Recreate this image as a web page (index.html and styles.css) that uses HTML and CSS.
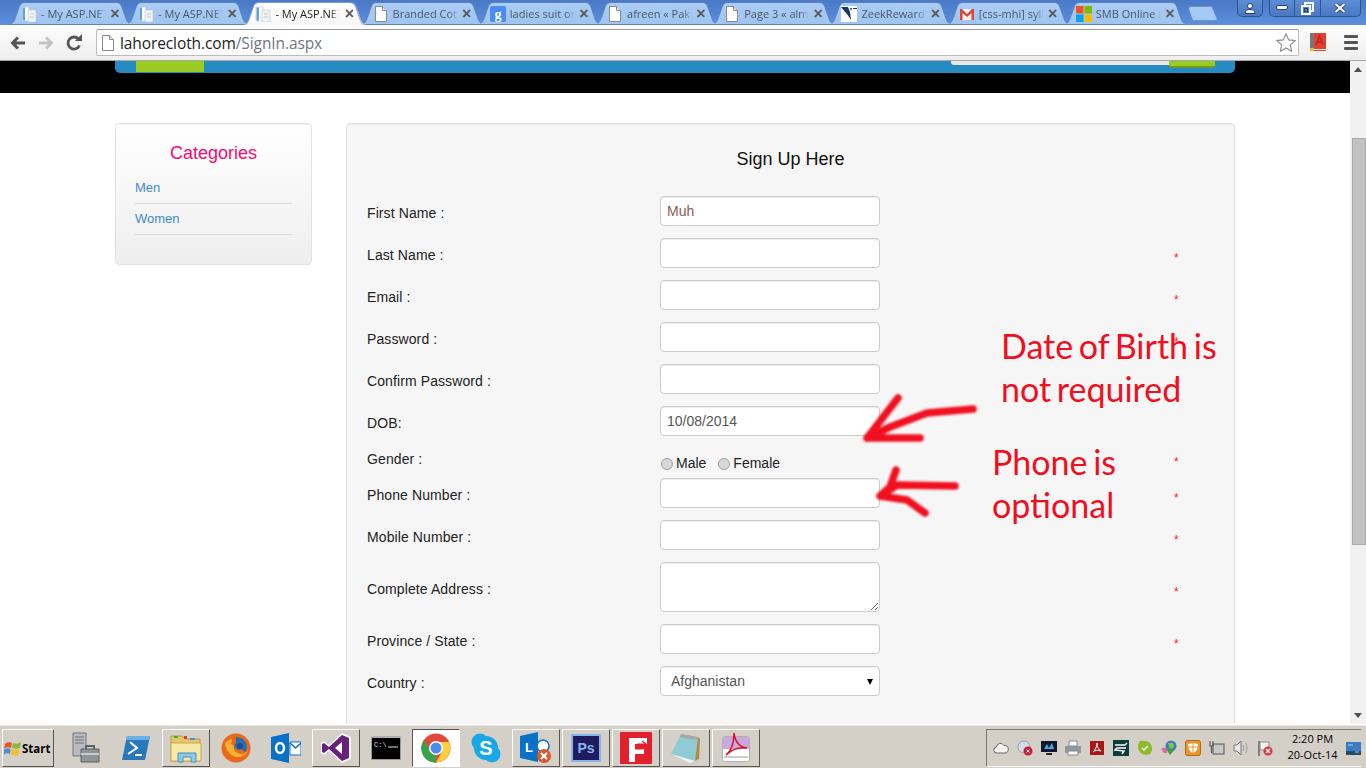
FILE: index.html
```html
<!doctype html>
<html lang="en">
<head>
  <meta charset="utf-8">
  <title>lahorecloth.com/SignIn.aspx</title>
  <link rel="stylesheet" href="styles.css">
</head>
<body>
  <svg class="defs" width="0" height="0">
    <symbol id="doc" viewBox="0 0 16 16">
      <path d="M2.5 .5h7l4 4v11h-11z" fill="#fff" stroke="#8a8a8a"/>
      <path d="M9.5 .5v4h4" fill="#e8e8e8" stroke="#8a8a8a"/>
    </symbol>
    <symbol id="asp" viewBox="0 0 16 16">
      <path d="M1 1h7v14H1z" fill="#fff" stroke="#b8c4d0" stroke-width=".6"/>
      <path d="M1.5 1.5h2.5v13H1.500z" fill="#5aa5e0"/>
      <path d="M7 4h8v12H7z" fill="#f2f2f2" stroke="#b8c4d0" stroke-width=".6"/>
      <path d="M9 8h4M9 11h4" stroke="#c8c8c8"/>
    </symbol>
  </svg>

  <div class="tabstrip">
    <div class="tab"><svg class="favicon"><use href="#asp"/></svg><span class="tab-label">- My ASP.NET</span><span class="tab-close">×</span></div>
    <div class="tab"><svg class="favicon"><use href="#asp"/></svg><span class="tab-label">- My ASP.NET</span><span class="tab-close">×</span></div>
    <div class="tab active"><svg class="favicon"><use href="#asp"/></svg><span class="tab-label">- My ASP.NET</span><span class="tab-close">×</span></div>
    <div class="tab"><svg class="favicon"><use href="#doc"/></svg><span class="tab-label">Branded Cotton</span><span class="tab-close">×</span></div>
    <div class="tab">
      <svg class="favicon" viewBox="0 0 16 16"><rect width="16" height="16" rx="2" fill="#4c8bf0"/><text x="8" y="12.500" text-anchor="middle" font-size="14" font-family="Liberation Serif" font-weight="700" fill="#fff">g</text></svg>
      <span class="tab-label">ladies suit online</span><span class="tab-close">×</span>
    </div>
    <div class="tab"><svg class="favicon"><use href="#doc"/></svg><span class="tab-label">afreen « Pakistan</span><span class="tab-close">×</span></div>
    <div class="tab"><svg class="favicon"><use href="#doc"/></svg><span class="tab-label">Page 3 « almirah</span><span class="tab-close">×</span></div>
    <div class="tab">
      <svg class="favicon" viewBox="0 0 16 16"><rect width="16" height="16" fill="#fff"/><path d="M0 1h7l2 5 1 8-4-6-2-2zM9 2h2l-1 3zM12 2h4v1h-4z" fill="#1c3a5c"/></svg>
      <span class="tab-label">ZeekRewards</span><span class="tab-close">×</span>
    </div>
    <div class="tab">
      <svg class="favicon" viewBox="0 0 16 16"><path d="M1 3h14v11H1z" fill="#f4f0ea"/><path d="M1 14V3h2l5 5 5-5h2v11h-2.500V7L8 11 3.500 7v7z" fill="#d8453a"/></svg>
      <span class="tab-label">[css-mhi] syllabus</span><span class="tab-close">×</span>
    </div>
    <div class="tab">
      <svg class="favicon" viewBox="0 0 16 16"><path d="M0 0h7.500v7.500H0z" fill="#f25022"/><path d="M8.500 0H16v7.500H8.500z" fill="#7fba00"/><path d="M0 8.500h7.500V16H0z" fill="#00a4ef"/><path d="M8.500 8.500H16V16H8.500z" fill="#ffb900"/></svg>
      <span class="tab-label">SMB Online Event</span><span class="tab-close">×</span>
    </div>
    <div class="newtab"></div>
    <div class="winbtn user">
      <svg width="12" height="11" viewBox="0 0 12 11"><circle cx="6" cy="3" r="2.500" fill="#fff" stroke="#24406e"/><path d="M1 10.500c0-3 2-4 5-4s5 1 5 4z" fill="#fff" stroke="#24406e"/></svg>
    </div>
    <div class="wincontrols">
      <div class="winbtn"><svg width="12" height="6" viewBox="0 0 12 6"><rect x=".5" y=".5" width="11" height="4" rx="1.500" fill="#fff" stroke="#24406e"/></svg></div>
      <div class="winbtn"><svg width="13" height="13" viewBox="0 0 13 13"><rect x="4" y="1" width="8" height="8" fill="none" stroke="#fff" stroke-width="2"/><rect x="1" y="4" width="8" height="8" fill="#4f7fc9" stroke="#fff" stroke-width="2"/><rect x="3.500" y="6.500" width="3" height="3" fill="none" stroke="#24406e"/></svg></div>
      <div class="winbtn close"><svg width="14" height="10" viewBox="0 0 14 10"><path d="M2.500 1l9 8M11.500 1l-9 8" stroke="#24406e" stroke-width="3.600"/><path d="M2.500 1l9 8M11.500 1l-9 8" stroke="#fff" stroke-width="2"/></svg></div>
    </div>
  </div>

  <div class="toolbar">
    <svg class="navbtn" width="20" height="16" viewBox="0 0 20 16"><path d="M17 8H5M10 2.500 4.500 8 10 13.500" fill="none" stroke="#555" stroke-width="3"/></svg>
    <svg class="navbtn" width="20" height="16" viewBox="0 0 20 16"><path d="M3 8h12M10 2.500 15.500 8 10 13.500" fill="none" stroke="#c4c4c4" stroke-width="3"/></svg>
    <svg class="navbtn" width="18" height="18" viewBox="0 0 18 18"><path d="M14.500 11.500a6 6 0 1 1-1-6.500" fill="none" stroke="#555" stroke-width="2.800"/><path d="M10 7h7V0z" fill="#555"/></svg>
    <div class="omnibox">
      <svg class="omni-page" width="16" height="16"><use href="#doc"/></svg>
      <span class="url">lahorecloth.com<span class="url-path">/SignIn.aspx</span></span>
      <svg class="star" width="20" height="19" viewBox="0 0 20 19"><path d="m10 1 2.700 5.900 6.300.7-4.700 4.300 1.300 6.300L10 15l-5.600 3.200 1.300-6.300L1 7.600l6.300-.7z" fill="#fff" stroke="#8f8f8f" stroke-width="1.200"/></svg>
    </div>
    <svg class="ext" width="16" height="19" viewBox="0 0 16 19"><path d="M0 0h16v16H4v2H0z" fill="#e04030"/><path d="M0 0h4v15H0z" fill="#777"/><path d="M0 15h4v3H0z" fill="#e8b93c"/><path d="M4 17.500h12" stroke="#d84030"/><path d="M6 12 9.500 3 13 12M7.500 9h4" fill="none" stroke="#b52a20" stroke-width="1.500"/></svg>
    <div class="menu"><span></span><span></span><span></span></div>
  </div>

  <div class="viewport">
    <div class="page">
      <div class="band">
        <div class="navbar">
          <div class="navbar-active"></div>
          <div class="search">
            <div class="search-input"></div>
            <div class="search-button"></div>
          </div>
        </div>
      </div>

      <div class="layout">
        <aside class="sidebar">
          <h3>Categories</h3>
          <ul>
            <li><a>Men</a></li>
            <li><a>Women</a></li>
          </ul>
        </aside>

        <section class="signup">
          <h2>Sign Up Here</h2>
          <div class="row">
            <label>First Name :</label>
            <input class="field name-value" type="text" value="Muh">
            <span></span>
          </div>
          <div class="row">
            <label>Last Name :</label>
            <input class="field" type="text">
            <span class="req">*</span>
          </div>
          <div class="row">
            <label>Email :</label>
            <input class="field" type="text">
            <span class="req">*</span>
          </div>
          <div class="row">
            <label>Password :</label>
            <input class="field" type="password">
            <span class="req">*</span>
          </div>
          <div class="row">
            <label>Confirm Password :</label>
            <input class="field" type="password">
            <span class="req">*</span>
          </div>
          <div class="row">
            <label>DOB:</label>
            <input class="field" type="text" value="10/08/2014">
            <span></span>
          </div>
          <div class="row row-gender">
            <label>Gender :</label>
            <div class="radios">
              <span class="radio"></span><span class="radio-text">Male</span>
              <span class="radio"></span><span class="radio-text">Female</span>
            </div>
            <span class="req">*</span>
          </div>
          <div class="row">
            <label>Phone Number :</label>
            <input class="field" type="text">
            <span class="req">*</span>
          </div>
          <div class="row">
            <label>Mobile Number :</label>
            <input class="field" type="text">
            <span class="req">*</span>
          </div>
          <div class="row">
            <label>Complete Address :</label>
            <textarea class="field area"></textarea>
            <span class="req">*</span>
          </div>
          <div class="row">
            <label>Province / State :</label>
            <input class="field" type="text">
            <span class="req">*</span>
          </div>
          <div class="row">
            <label>Country :</label>
            <div class="select-wrap">
              <select class="field select"><option>Afghanistan</option></select>
            </div>
            <span></span>
          </div>
        </section>
      </div>

      <!-- red notes painted over the screenshot -->
      <div class="note note-dob">Date of Birth is<br>not required</div>
      <div class="note note-phone">Phone is<br>optional</div>
      <svg class="scribble" width="120" height="130" viewBox="860 390 120 130">
        <path d="M973 409 927 413 890 427 867 438M898 398 867 438 920 438" />
        <path d="M955 486 897 485 880 496M896 470 890 487 880 496 907 500 925 513" />
      </svg>
    </div>

    <div class="scrollbar">
      <div class="sb-up"></div>
      <div class="sb-track"><div class="sb-thumb"></div></div>
      <div class="sb-down"></div>
    </div>
  </div>

  <div class="taskbar">
    <div class="start">
      <svg width="17" height="15" viewBox="0 0 17 15"><path d="M1 3c2-2 4-2 7-1L7 7C4 6 2 6 0 8z" fill="#e0582a"/><path d="M9 2c3 1 5 1 8-1l-1 6c-3 1-5 1-8 0z" fill="#8cb63c"/><path d="M0 9c2-2 4-2 6.500-1L6 13c-2-1-4-1-7 1z" fill="#4a90d8"/><path d="M7.500 8c3 1 5 1 8 0l-1 6c-3 1-5 1-8-1z" fill="#f0c030"/></svg>
      <span>Start</span>
    </div>
    <div class="task-items">
      <div class="task">
        <svg width="30" height="32" viewBox="0 0 30 32"><path d="M2 1h13v23H2z" fill="#b8bcc0" stroke="#707478"/><path d="M4 5h9M4 8h9M4 11h9" stroke="#70757a"/><path d="M10 17h18v13H10z" fill="#8e9498" stroke="#5c6064"/><path d="M15 17v-3h8v3" fill="none" stroke="#5c6064" stroke-width="2"/><path d="M10 22h18" stroke="#c8ccd0" stroke-width="2"/></svg>
      </div>
      <div class="task">
        <svg width="30" height="26" viewBox="0 0 30 26"><path d="M6 1h23l-5 24H1z" fill="#2a78bc"/><path d="M6 1h23l-1 4H5z" fill="#6cb0e4"/><path d="M9 7l7 6-9 6M14 20h7" fill="none" stroke="#fff" stroke-width="2"/></svg>
      </div>
      <div class="task raised">
        <svg width="32" height="30" viewBox="0 0 32 30"><path d="M1 3h11l3 3h15v22H1z" fill="#e6c868" stroke="#b89a40"/><path d="M4 3h4v2H4z" fill="#3cb048"/><path d="M14 3h3v3h-3z" fill="#d84030"/><path d="M20 5h5v2h-5z" fill="#4a90d8"/><path d="M1 10h30v18H1z" fill="#f8e8a8" stroke="#c8a850"/><path d="M8 29v-9h18v9h-5v-5h-8v5z" fill="#8cc8ec" stroke="#4a90c0"/></svg>
      </div>
      <div class="task">
        <svg width="30" height="30" viewBox="0 0 30 30"><circle cx="15" cy="15" r="14.500" fill="#e8681c"/><path d="M15 4c6 0 11 4 11 10 0 2-1 4-2 5-2-3-5-3-7-2l-4-3 2-5z" fill="#2a6cb0"/><path d="M4 10c1 10 8 15 15 14 4-1 7-3 8-7-2 4-7 5-10 3-3-1-5-4-4-7l-3-2 1-5c-3 1-5 2-7 4z" fill="#f8b030"/><circle cx="19" cy="13" r="3" fill="#1e4c90"/></svg>
      </div>
      <div class="task">
        <svg width="30" height="30" viewBox="0 0 30 30"><path d="M0 4 18 0v30L0 26z" fill="#0a72c6"/><ellipse cx="9" cy="15" rx="4" ry="5" fill="none" stroke="#fff" stroke-width="2.500"/><path d="M19 9h11v13H19z" fill="#fff" stroke="#0a72c6"/><path d="M19 10l5.500 5L30 10" fill="none" stroke="#0a72c6" stroke-width="1.500"/></svg>
      </div>
      <div class="task raised">
        <svg width="32" height="32" viewBox="0 0 32 32"><path d="M22 1 31 5v22l-9 4L9 19l-5 4-3-2V11l3-2 5 4z" fill="#fff"/><path d="M22 3 29 6v20l-7 3-13-12-5 4-2-1V12l2-1 5 4zM22 10l-7 6 7 6z" fill="#68217a" fill-rule="evenodd"/></svg>
      </div>
      <div class="task">
        <svg width="30" height="24" viewBox="0 0 30 24"><rect x=".5" y=".5" width="29" height="23" fill="#000" stroke="#999"/><path d="M0 0h30v2H0z" fill="#b0b0b0"/><text x="3" y="11" font-family="Liberation Mono" font-size="7" fill="#ddd">C:\</text><path d="M17 11h10" stroke="#ddd"/></svg>
      </div>
      <div class="task pressed">
        <svg width="30" height="30" viewBox="0 0 30 30"><circle cx="15" cy="15" r="14.500" fill="#e04a3a"/><path d="M15 15 2.500 22.500A14.500 14.500 0 0 0 15 29.500z" fill="#3aa24a"/><path d="M2.500 23A14.500 14.500 0 0 1 3 7l7 12 5 10.500A14.500 14.500 0 0 1 2.500 23z" fill="#3aa24a"/><path d="M15 9h13a14.500 14.500 0 0 1-13 20.500l6-11z" fill="#fbd03c"/><circle cx="15" cy="15" r="7" fill="#fff"/><circle cx="15" cy="15" r="5.500" fill="#4a8ce8"/></svg>
      </div>
      <div class="task">
        <svg width="30" height="30" viewBox="0 0 30 30"><circle cx="9" cy="9" r="8.500" fill="#18a8e8"/><circle cx="21" cy="21" r="8.500" fill="#18a8e8"/><circle cx="15" cy="15" r="12" fill="#18a8e8"/><text x="15" y="22" text-anchor="middle" font-family="Liberation Sans" font-weight="700" font-size="20" fill="#fff">S</text></svg>
      </div>
      <div class="task raised">
        <svg width="32" height="32" viewBox="0 0 32 32"><path d="M0 4 18 0v30L0 26z" fill="#0a72c6"/><text x="5" y="20" font-family="Liberation Sans" font-weight="700" font-size="13" fill="#fff">L</text><circle cx="23" cy="14" r="6" fill="#fff" stroke="#0a72c6" stroke-width="1.500"/><circle cx="24" cy="24" r="7" fill="#d85a30"/><path d="M21 21l6 6M27 21l-6 6" stroke="#fff" stroke-width="2"/></svg>
      </div>
      <div class="task raised">
        <svg width="30" height="28" viewBox="0 0 30 28"><rect x="1" y="1" width="28" height="26" fill="#1f1b60" stroke="#88b4ec" stroke-width="2"/><text x="15" y="19" text-anchor="middle" font-family="Liberation Sans" font-weight="700" font-size="14" fill="#88b4ec">Ps</text></svg>
      </div>
      <div class="task raised">
        <svg width="32" height="32" viewBox="0 0 32 32"><rect width="32" height="32" rx="1" fill="#e3202e"/><path d="M9 30V6h18v6H15v5h9v5h-9v8z" fill="#fff"/><path d="M17 12h9M22 9l4 3-4 3M15 17h8" stroke="#e3202e" stroke-width="1.200" fill="none"/></svg>
      </div>
      <div class="task raised">
        <svg width="32" height="30" viewBox="0 0 32 30"><path d="M11 1 28 4 25 28 1 21z" fill="#8ecbd4"/><path d="M11 1 28 4 27 7 9.500 4z" fill="#a8a8a8"/><path d="M28 4l2 2-1 20-4 2z" fill="#b08a40"/><path d="M1 21l24 7-5 2z" fill="#eef2f4"/></svg>
      </div>
      <div class="task raised">
        <svg width="28" height="30" viewBox="0 0 28 30"><rect x=".5" y="3.500" width="27" height="25" rx="2" fill="#fff" stroke="#b0b0b0"/><path d="M1 4h26v12H1z" fill="#c8a8e0"/><path d="M2 24h24" stroke="#ccc" stroke-width="2"/><path d="M12 0c1 8 4 14 13 15-7-1-15 1-21 7 5-4 8-12 8-22" fill="none" stroke="#e01020" stroke-width="1.500"/></svg>
      </div>
    </div>

    <div class="tray">
      <svg class="tray-icon" viewBox="0 0 16 16"><path d="M4 13a3 3 0 0 1-.500-6A4 4 0 0 1 11 5.500 3.500 3.500 0 0 1 12 13z" fill="#f4f4f4" stroke="#666"/></svg>
      <svg class="tray-icon" viewBox="0 0 16 16"><circle cx="7" cy="7" r="6" fill="#d4dde2" stroke="#8fa2ac"/><circle cx="11" cy="11" r="4.500" fill="#c81e3c"/><path d="M9.500 9.500l3 3M12.500 9.500l-3 3" stroke="#fff"/></svg>
      <svg class="tray-icon" viewBox="0 0 16 16"><rect y="1" width="16" height="11" fill="#10182c"/><path d="M3 9l3-5 2 4 3-5 2 6z" fill="#4aa8e8"/><path d="M5 13h6v2H5z" fill="#222"/></svg>
      <svg class="tray-icon" viewBox="0 0 16 16"><path d="M4 1h8v5H4z" fill="#fff" stroke="#888"/><rect y="6" width="16" height="7" rx="1" fill="#8e98a4"/><path d="M3 11h10v4H3z" fill="#fff" stroke="#888"/></svg>
      <svg class="tray-icon" viewBox="0 0 16 16"><rect x="1" y="1" width="14" height="14" fill="#a81818"/><path d="M8 3c0 4 1 6 4 8-3-1-6-1-8 1 2-2 4-5 4-9z" fill="none" stroke="#fff"/></svg>
      <svg class="tray-icon" viewBox="0 0 16 16"><rect width="16" height="16" fill="#0c3c3c"/><path d="M2 5h10l2-2M13 8H4l-2 2 9 1-2 3" fill="none" stroke="#fff" stroke-width="1.500"/></svg>
      <svg class="tray-icon" viewBox="0 0 16 16"><path d="M3 1h6c5 1 6 5 6 8s-2 6-6 6c-3 0-8-3-8-8 0-3 1-5 2-6z" fill="#8cbc2c"/><path d="M5 8l2 2 4-4" fill="none" stroke="#fff" stroke-width="1.500"/></svg>
      <svg class="tray-icon" viewBox="0 0 16 16"><circle cx="10" cy="6" r="5.500" fill="#3c80c0"/><path d="M7 3l5 0 1 4-4 2z" fill="#8cc048"/><path d="M0 9c2-2 4-2 6 0v4H3z" fill="#e06a9a"/><path d="M5 9h9l-5 6z" fill="#3ca038"/></svg>
      <svg class="tray-icon" viewBox="0 0 16 16"><rect x=".5" y=".5" width="15" height="15" rx="2" fill="#ec9428" stroke="#b06a10"/><path d="M3 4c3-1 7-1 10 0 0 5-2 8-5 9-3-1-5-4-5-9z" fill="#fff"/><path d="M8 3v10M3 7h10" stroke="#ec9428"/></svg>
      <svg class="tray-icon" viewBox="0 0 16 16"><rect x="4" y="4" width="11" height="10" fill="#c8c8c8" stroke="#555"/><path d="M1 1v5h3V1M2.500 6v7" fill="none" stroke="#555" stroke-width="1.200"/></svg>
      <svg class="tray-icon" viewBox="0 0 16 16"><path d="M1 5h3l4-4v14l-4-4H1z" fill="#e8e8e8" stroke="#777"/><path d="M10 5c1 2 1 4 0 6M12.500 3c2 3 2 7 0 10" fill="none" stroke="#999"/></svg>
      <svg class="tray-icon" viewBox="0 0 16 16"><path d="M2 1v15" stroke="#666" stroke-width="1.500"/><path d="M3 2h9v8H3z" fill="#f2f2f2" stroke="#888"/><circle cx="11" cy="11" r="4.500" fill="#e0343c"/><path d="M9 9l4 4M13 9l-4 4" stroke="#fff" stroke-width="1.300"/></svg>
      <div class="clock"><div>2:20 PM</div><div>20-Oct-14</div></div>
      <svg class="show-desktop" width="15" height="13" viewBox="0 0 15 13"><rect width="15" height="13" fill="#3a7cc4"/><path d="M0 9h15v4H0z" fill="#2a4c6c"/><path d="M2 3h5M9 10h4" stroke="#9cd0f4"/></svg>
    </div>
  </div>
</body>
</html>
```

FILE: styles.css
```css
/* Page layout */
* { box-sizing: border-box; margin: 0; padding: 0; }
html, body { height: 100%; overflow: hidden; }
body {
  display: flex;
  flex-direction: column;
  font-family: "Liberation Sans", Arial, sans-serif;
  background: #fff;
  color: #222;
}
.defs { position: absolute; }

/* Browser tabs */
.tabstrip {
  display: flex;
  align-items: flex-start;
  height: 25px;
  padding-left: 8px;
  flex: none;
  background: linear-gradient(#4a79c6, #5c8fdc);
}
.tab {
  position: relative;
  display: flex;
  align-items: center;
  flex: none;
  width: 125px;
  height: 23px;
  margin-top: 2px;
  margin-right: -7.8px;
  padding: 0 11px 0 13px;
  font-family: "Open Sans", sans-serif;
  font-size: 11px;
  color: #4a5566;
}
.tab::before,
.tab::after {
  content: "";
  position: absolute;
  left: 0;
  top: 0;
  width: 125px;
  height: 23px;
  clip-path: path("M0 23C5 23 6 19 8 13L11 4C12 1 14 0 17 0L108 0C111 0 113 1 114 4L117 13C119 19 120 23 125 23Z");
}
.tab::before { background: #5d82bd; }
.tab::after {
  background: linear-gradient(#aacdf6, #9fc4f0);
  transform: scale(0.985, 0.92);
  transform-origin: 50% 50%;
}
.tab > * { position: relative; z-index: 1; }
.tab.active { z-index: 2; color: #222; }
.tab.active::before { background: linear-gradient(#7a98c8, #c8c8c8); }
.tab.active::after {
  background: linear-gradient(#fff, #f8f8f8);
  transform: scale(0.985, 1);
  transform-origin: 50% 100%;
  top: 1px;
  height: 22px;
}
.favicon { flex: none; width: 16px; height: 16px; margin-right: 4px; }
.tab-label {
  flex: 1;
  overflow: hidden;
  white-space: nowrap;
  -webkit-mask-image: linear-gradient(90deg, #000 86%, transparent);
  mask-image: linear-gradient(90deg, #000 86%, transparent);
}
.tab-close {
  flex: none;
  width: 14px;
  margin-left: 2px;
  text-align: center;
  font-family: "Liberation Sans", sans-serif;
  font-size: 16px;
  font-weight: 700;
  line-height: 16px;
  color: #5a5a5a;
}
.newtab {
  flex: none;
  width: 30px;
  height: 15px;
  margin: 6px 0 0 7.800px;
  background: #a6c9f3;
  border: 1px solid #6f93c6;
  clip-path: polygon(0 0, 78% 0, 100% 100%, 18% 100%);
  border-radius: 3px;
}
.winbtn {
  display: flex;
  align-items: center;
  justify-content: center;
  height: 17px;
  width: 26px;
  background: linear-gradient(#5d8dd6, #4b78c2);
  border: 1px solid #2f558f;
  border-top: none;
  border-radius: 0 0 5px 5px;
}
.user { margin-left: 19px; flex: none; }
.wincontrols { display: flex; margin-left: 6px; margin-right: 6px; flex: none; }
.wincontrols .winbtn { border-radius: 0; border-left: none; }
.wincontrols .winbtn:first-child { border-left: 1px solid #2f558f; border-bottom-left-radius: 5px; }
.wincontrols .winbtn:last-child { width: 40px; border-bottom-right-radius: 5px; }

/* Toolbar */
.toolbar {
  position: relative;
  display: flex;
  align-items: center;
  flex: none;
  height: 36px;
  padding-left: 8px;
  background: linear-gradient(#fdfdfd, #eeeeee);
  border-bottom: 1px solid #a8a8a8;
}
.navbtn { flex: none; margin-right: 8px; }
.navbtn:nth-child(2) { margin-right: 9px; }
.navbtn:nth-child(3) { margin-right: 11px; }
.omnibox {
  display: flex;
  align-items: center;
  width: 1203px;
  height: 27px;
  margin-left: 2px;
  padding: 0 2px 0 3px;
  background: #fff;
  border: 1px solid #bdbdbd;
  border-top-color: #9a9a9a;
  border-radius: 2px;
}
.omni-page { flex: none; margin: 0 4px 0 0; }
.url {
  flex: 1;
  font-family: "Open Sans", sans-serif;
  font-size: 15.5px;
  letter-spacing: -0.1px;
  color: #1c1c1c;
}
.url-path { color: #6f7680; }
.star { flex: none; }
.ext { flex: none; margin-left: 11px; }
.menu { display: flex; flex-direction: column; gap: 3px; margin-left: 18px; }
.menu span { display: block; width: 14px; height: 3px; background: #555; border-radius: 1px; }

/* Page viewport */
.viewport { flex: 1; display: flex; min-height: 0; }
.page { position: relative; flex: 1; overflow: hidden; }
.band { height: 32px; background: #000; }
.navbar {
  display: flex;
  justify-content: space-between;
  align-items: flex-start;
  width: 1120px;
  height: 12px;
  margin-left: 115px;
  padding: 0 20px 0 21px;
  background: #268ac3;
  border-radius: 0 0 5px 5px;
}
.navbar-active { width: 68px; height: 11px; background: #99cc22; }
.search { display: flex; align-items: flex-start; }
.search-input { width: 218px; height: 4px; background: #e8e8e8; border-radius: 0 0 0 3px; }
.search-button {
  width: 46px;
  height: 7px;
  background: #99cc22;
  border-bottom: 2px solid #6f9a1e;
  border-radius: 0 0 3px 3px;
}
.layout {
  display: grid;
  grid-template-columns: 197px 889px;
  gap: 34px;
  align-items: start;
  margin: 30px 0 0 115px;
}

/* Sidebar */
.sidebar {
  height: 142px;
  padding: 19px 19px 0;
  background: linear-gradient(#fff, #eeeeee);
  border: 1px solid #e3e3e3;
  border-radius: 4px;
  box-shadow: inset 0 1px 1px rgba(0, 0, 0, 0.05);
}
.sidebar h3 {
  margin-bottom: 10px;
  font-size: 18px;
  font-weight: 400;
  line-height: 20px;
  text-align: center;
  color: #f50a6f;
}
.sidebar ul { list-style: none; }
.sidebar li {
  height: 31px;
  padding-top: 6px;
  font-size: 13px;
  line-height: 18px;
  color: #428bca;
  border-bottom: 1px solid #dcdcdc;
}

/* Sign up form */
.signup {
  height: 800px;
  padding: 22px 20px 0;
  background: #f6f6f6;
  border: 1px solid #e3e3e3;
  border-radius: 4px;
  box-shadow: inset 0 1px 1px rgba(0, 0, 0, 0.05);
}
.signup h2 {
  margin-bottom: 23px;
  font-size: 18px;
  font-weight: 400;
  line-height: 27px;
  text-align: center;
  color: #111;
}
.row {
  display: grid;
  grid-template-columns: 293px 220px 1fr;
  align-items: center;
  margin-bottom: 12px;
  font-size: 14px;
}
.row label { padding-top: 4px; line-height: 20px; letter-spacing: 0.1px; color: #222; }
.req {
  padding: 10px 0 0 294px;
  font-size: 12px;
  line-height: 14px;
  color: #f22;
}
.field {
  display: block;
  width: 220px;
  height: 30px;
  padding: 0 6px;
  font-family: "Liberation Sans", Arial, sans-serif;
  font-size: 14px;
  color: #555;
  background: #fff;
  border: 1px solid #ccc;
  border-radius: 4px;
  box-shadow: inset 0 1px 1px rgba(0, 0, 0, 0.075);
}
.name-value { color: #8a5c50; }
.area { height: 50px; resize: vertical; }
.select-wrap { position: relative; }
.select-wrap::after {
  content: "";
  position: absolute;
  left: 207px;
  top: 13px;
  border-left: 3.500px solid transparent;
  border-right: 3.500px solid transparent;
  border-top: 6px solid #000;
}
.select { padding-left: 10px; appearance: none; -webkit-appearance: none; }
.row-gender { align-items: start; height: 30px; margin-bottom: 0; }
.row-gender label { padding-top: 1px; }
.row-gender .req { padding-top: 7px; }
.radios { display: flex; align-items: center; height: 20px; margin-top: 5px; line-height: 20px; color: #222; }
.radio {
  width: 12px;
  height: 12px;
  margin: 2px 3px 0 1px;
  background: #d8d8d8;
  border: 1px solid #a0a0a0;
  border-radius: 50%;
}
.radio-text { margin-right: 11px; }

/* Notes over the page */
.note {
  position: absolute;
  font-family: Lato, sans-serif;
  font-size: 34px;
  line-height: 43px;
  word-spacing: -3px;
  color: #f00f1e;
}
.note-dob { left: 1001px; top: 263px; }
.note-phone { left: 992px; top: 379px; }
.scribble {
  position: absolute;
  left: 860px;
  top: 329px;
  fill: none;
  stroke: #f01020;
  stroke-width: 7.5;
  stroke-linecap: round;
  stroke-linejoin: round;
  filter: blur(1px);
}

/* Scrollbar */
.scrollbar {
  display: flex;
  flex-direction: column;
  flex: none;
  width: 16px;
  background: #f1f1f1;
}
.sb-up, .sb-down { position: relative; flex: none; height: 17px; }
.sb-up::after, .sb-down::after {
  content: "";
  position: absolute;
  left: 4px;
  top: 6px;
  border-left: 4px solid transparent;
  border-right: 4px solid transparent;
}
.sb-up::after { border-bottom: 5px solid #505050; }
.sb-down::after { border-top: 5px solid #505050; }
.sb-track { flex: 1; padding-top: 60px; }
.sb-thumb { height: 407px; margin: 0 0 0 2px; background: #c2c2c2; border: 1px solid #aaa; }

/* Windows taskbar */
.taskbar {
  display: flex;
  align-items: center;
  flex: none;
  height: 44px;
  padding: 3px 0 0 2px;
  background: #d4d0c8;
  border-top: 1px solid #fff;
  box-shadow: inset 0 1px 0 #e8e6e0;
}
.start {
  display: flex;
  align-items: center;
  gap: 1px;
  width: 52px;
  height: 38px;
  padding-left: 1px;
  font-family: "Open Sans", sans-serif;
  font-size: 11.5px;
  font-weight: 700;
  color: #000;
  border: 1px solid;
  border-color: #fff #555 #555 #fff;
}
.task-items { display: flex; margin-left: 8px; }
.task {
  display: flex;
  align-items: center;
  justify-content: center;
  width: 48px;
  height: 38px;
  margin-right: 2px;
  border: 1px solid transparent;
}
.task.raised { border-color: #fff #555 #555 #fff; }
.task.pressed { background: #fff; border-color: #555 #fff #fff #555; }
.tray {
  display: flex;
  align-items: center;
  height: 38px;
  margin-left: auto;
  margin-right: 5px;
  padding-left: 6px;
  width: 375px;
  border: 1px solid;
  border-color: #777 #fff #fff #777;
  border-right: none;
  border-bottom-color: #fff;
}
.tray-icon { flex: none; width: 16px; height: 16px; margin-right: 8px; }
.clock {
  width: 70px;
  margin-left: 2px;
  padding-bottom: 2px;
  font-family: "Open Sans", sans-serif;
  font-size: 11px;
  line-height: 16px;
  text-align: center;
  color: #000;
}
.show-desktop { flex: none; margin-left: 4px; }
```
